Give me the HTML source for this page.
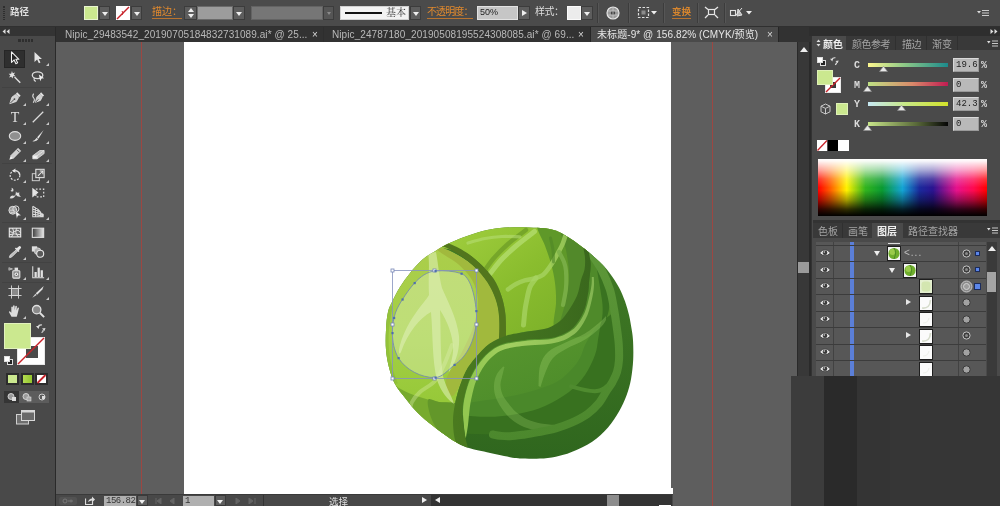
<!DOCTYPE html>
<html lang="zh-CN">
<head>
<meta charset="utf-8">
<title>Illustrator</title>
<style>
*{box-sizing:border-box;margin:0;padding:0}
html,body{width:1000px;height:506px;overflow:hidden;background:#5e5e5e}
body{position:relative;font-family:"Liberation Sans","Noto Sans CJK SC",sans-serif;font-size:11px;color:#d6d6d6;line-height:1}
.a{position:absolute}
#ctrl,#tabs,#tools,#right,#status{will-change:transform}
#ctrl{left:0;top:0;width:1000px;height:27px;background:#4b4b4b;border-bottom:1px solid #303030}
#tabs{left:56px;top:27px;width:755px;height:15px;background:#323232}
#tools{left:0;top:27px;width:56px;height:479px;background:#494949;border-right:1px solid #2a2a2a}
#toolhead{left:0;top:27px;width:55px;height:9px;background:#343434}
#paste{left:56px;top:42px;width:742px;height:464px;background:#5e5e5e}
#art{left:184px;top:42px;width:487px;height:452px;background:#fff}
.guide{top:42px;width:1px;height:464px;background:#9c4742}
#vscroll{left:797px;top:42px;width:14px;height:464px;background:#383838;border-left:1px solid #2a2a2a;border-right:2px solid #2a2a2a}
#right{left:811px;top:27px;width:189px;height:479px;background:#4a4a4a}
#status{left:56px;top:494px;width:617px;height:12px;background:#484848;border-top:1px solid #3a3a3a}
.btn{background:#5d5d5d;border:1px solid #3c3c3c}
.or{color:#e0892e;border-bottom:1px solid #b87430}
.tri-d{width:0;height:0;border-left:3px solid transparent;border-right:3px solid transparent;border-top:4px solid #eee}
</style>
</head>
<body>
<div id="paste" class="a"></div>
<div id="art" class="a"></div>
<!--CAB--><svg class="a" style="left:0;top:0" width="1000" height="506" viewBox="0 0 1000 506">
<defs>
<clipPath id="sil"><path d="M386.0 349.6C385.5 343.3 385.7 336.1 386.0 329.8C386.3 323.5 386.9 316.8 388.0 312.0C389.1 307.2 390.5 305.2 392.5 301.0C394.5 296.8 397.1 291.6 400.0 287.0C402.9 282.4 405.9 278.0 409.7 273.4C413.4 268.8 417.9 263.4 422.5 259.5C427.1 255.6 433.0 252.4 437.4 249.7C441.8 247.0 444.4 245.5 449.0 243.3C453.6 241.2 459.4 238.9 465.0 236.8C470.6 234.7 477.0 232.4 482.8 230.9C488.6 229.4 493.7 228.5 499.8 227.9C505.9 227.3 513.3 227.2 519.6 227.2C525.9 227.2 532.7 227.5 537.4 227.8C542.1 228.1 544.4 228.1 548.0 228.8C551.6 229.5 555.5 230.4 559.0 231.9C562.5 233.4 565.7 235.7 569.0 237.8C572.3 239.9 575.8 242.3 579.0 244.7C582.2 247.1 585.1 249.2 588.5 252.0C591.9 254.8 595.8 258.2 599.3 261.6C602.8 265.0 605.9 268.2 609.2 272.5C612.5 276.8 616.4 282.6 619.0 287.4C621.6 292.2 623.3 296.6 625.0 301.2C626.7 305.8 627.9 310.4 629.0 315.0C630.1 319.6 630.9 324.8 631.6 329.0C632.3 333.2 632.7 334.9 633.0 340.0C633.3 345.1 633.5 353.1 633.2 359.6C632.9 366.2 632.1 373.3 631.0 379.3C629.9 385.3 628.5 390.1 626.5 395.5C624.5 400.9 622.1 406.3 619.0 411.6C615.9 416.9 612.5 422.5 608.0 427.5C603.5 432.5 598.3 437.6 592.2 441.7C586.1 445.8 577.7 449.5 571.6 452.0C565.5 454.5 561.1 455.6 555.8 456.7C550.5 457.8 545.1 458.3 540.0 458.6C534.9 458.9 530.0 458.8 525.0 458.6C520.0 458.4 516.8 458.4 510.0 457.2C503.2 456.0 491.3 453.3 484.0 451.6C476.7 449.9 470.8 448.8 466.2 447.2C461.6 445.6 459.9 444.4 456.3 442.3C452.7 440.2 449.0 437.7 444.4 434.4C439.8 431.1 433.5 426.6 428.6 422.5C423.7 418.4 418.7 413.8 414.8 409.7C410.9 405.6 408.3 402.1 405.0 397.8C401.7 393.5 397.7 389.1 395.0 384.0C392.3 378.9 390.5 373.1 389.0 367.4C387.5 361.7 386.5 355.9 386.0 349.6Z"/></clipPath>
<linearGradient id="gTop" x1="0" y1="0" x2="1" y2="1"><stop offset="0" stop-color="#a3d040"/><stop offset=".5" stop-color="#8abd2e"/><stop offset="1" stop-color="#78ad28"/></linearGradient>
<linearGradient id="gBR" x1="0" y1="0" x2=".35" y2="1"><stop offset="0" stop-color="#68a634"/><stop offset=".5" stop-color="#5a982f"/><stop offset="1" stop-color="#4f8e2b"/></linearGradient>
<linearGradient id="gRim" x1="0" y1="0" x2="0" y2="1"><stop offset="0" stop-color="#427c25"/><stop offset=".45" stop-color="#3a7222"/><stop offset="1" stop-color="#2f661e"/></linearGradient>
<linearGradient id="gR" x1="0" y1="0" x2="1" y2="1"><stop offset="0" stop-color="#5f9a32"/><stop offset="1" stop-color="#4a8228"/></linearGradient>
<linearGradient id="gBand" gradientUnits="userSpaceOnUse" x1="455" y1="0" x2="590" y2="0"><stop offset="0" stop-color="#4a7a1f"/><stop offset=".5" stop-color="#42721f"/><stop offset="1" stop-color="#3a681d"/></linearGradient>
<linearGradient id="gLeft" gradientUnits="userSpaceOnUse" x1="0" y1="250" x2="0" y2="400"><stop offset="0" stop-color="#abce4b"/><stop offset=".6" stop-color="#a3cf44"/><stop offset="1" stop-color="#97c939"/></linearGradient>
<linearGradient id="gLv" gradientUnits="userSpaceOnUse" x1="600" y1="0" x2="470" y2="0"><stop offset="0" stop-color="#7fb250"/><stop offset=".35" stop-color="#93c358"/><stop offset=".7" stop-color="#a2cf60"/><stop offset="1" stop-color="#93c750"/></linearGradient>
<linearGradient id="gRv" gradientUnits="userSpaceOnUse" x1="0" y1="250" x2="0" y2="440"><stop offset="0" stop-color="#5e9839"/><stop offset=".45" stop-color="#548f33"/><stop offset="1" stop-color="#4c882d"/></linearGradient>
</defs>
<g clip-path="url(#sil)">
<rect x="380" y="220" width="260" height="245" fill="url(#gRim)"/>
<path d="M587.0 249.5C587.8 250.2 589.1 250.7 591.5 254.0C593.9 257.4 598.5 263.7 601.5 269.6C604.5 275.5 607.7 282.7 609.8 289.3C611.9 295.9 612.8 302.4 614.0 309.0C615.2 315.6 616.2 323.0 617.0 329.0C617.8 335.0 618.5 339.8 618.8 345.0C619.1 350.2 619.3 355.5 619.0 360.0C618.7 364.5 618.1 368.3 617.0 372.0C615.9 375.7 614.2 378.8 612.5 382.0C610.8 385.2 608.8 387.4 606.5 391.0C604.2 394.6 601.7 399.9 598.5 403.7C595.3 407.5 592.0 410.8 587.5 414.0C583.0 417.2 576.9 420.3 571.6 422.7C566.3 425.1 561.1 426.8 555.8 428.3C550.5 429.8 545.1 430.8 540.0 431.8C534.9 432.8 530.0 433.8 525.0 434.5C520.0 435.2 514.2 436.1 510.0 436.3C505.8 436.5 502.8 436.1 500.0 435.8C497.2 435.5 494.2 434.7 493.0 434.5L440 433L440 300L560 240Z" fill="#38711f"/>
<path d="M450.0 416.0C452.0 415.9 455.3 415.4 462.0 415.5C468.7 415.6 480.3 417.1 490.0 416.8C499.7 416.5 510.8 415.3 520.0 413.5C529.2 411.7 536.8 409.6 545.0 406.0C553.2 402.4 562.3 397.2 569.0 392.0C575.7 386.8 580.7 381.2 585.0 375.0C589.3 368.8 592.8 360.8 595.0 355.0C597.2 349.2 597.2 344.5 598.0 340.0C598.8 335.5 599.3 331.7 600.0 328.0C600.7 324.3 601.7 319.7 602.0 318.0L560 240L440 300L440 425Z" fill="#4a882a"/>
<path d="M450.0 405.0C452.0 404.8 457.0 404.7 462.0 404.0C467.0 403.3 473.7 402.0 480.0 401.0C486.3 400.0 492.1 399.4 500.0 398.0C507.9 396.6 518.5 394.9 527.7 392.3C536.9 389.7 548.0 386.5 555.4 382.6C562.8 378.7 567.9 372.9 572.0 368.7C576.1 364.5 577.8 361.6 580.0 357.7C582.2 353.8 583.0 349.1 585.0 345.0C587.0 340.9 589.5 336.8 592.0 333.0C594.5 329.2 598.7 323.8 600.0 322.0L560 240L440 300L440 405Z" fill="url(#gBR)"/>
<path d="M588.8 252.0C588.9 253.3 590.2 259.1 590.5 262.0C590.8 264.9 590.6 266.6 590.4 269.6C590.2 272.6 589.7 275.6 589.2 280.0C588.8 284.4 588.6 290.5 587.7 295.8C586.8 301.1 586.1 306.3 583.7 311.6C581.3 316.9 577.4 323.4 573.4 327.4C569.4 331.4 558.1 334.1 560.0 335.5C561.9 336.9 577.7 338.6 585.0 336.0C592.3 333.4 599.2 324.5 604.0 320.0C608.8 315.5 613.1 314.1 614.0 309.0C614.9 303.9 611.7 295.9 609.5 289.3C607.3 282.7 604.2 275.5 601.0 269.6C597.8 263.7 592.0 256.9 590.0 254.0C588.0 251.1 588.7 250.7 588.8 252.0Z" fill="#4f8a2a"/>
<path d="M596 264 C603 275 610 292 609.500 304 C609 314 606 321 600 328 C603 318 603.500 308 601.500 297 C600 287 598 276 596 264Z" fill="#397220"/>
<path d="M556.0 432.0C553.3 431.8 545.3 431.6 540.0 430.8C534.7 430.0 528.9 429.1 524.0 427.0C519.1 424.9 514.2 421.7 510.5 418.5C506.8 415.3 504.0 411.7 501.5 408.0C499.0 404.3 496.8 400.3 495.5 396.5C494.2 392.7 493.8 388.6 494.0 385.0C494.2 381.4 495.0 378.1 496.5 375.0C498.0 371.9 501.9 367.9 503.0 366.5L504.5 367.0C504.1 368.7 502.7 374.0 502.0 377.0C501.3 380.0 500.4 382.1 500.5 385.0C500.6 387.9 501.2 391.4 502.5 394.5C503.8 397.6 506.2 400.6 508.5 403.5C510.8 406.4 512.8 409.3 516.0 412.0C519.2 414.7 523.3 417.6 527.5 419.5C531.7 421.4 536.2 422.6 541.0 423.5C545.8 424.4 553.5 424.8 556.0 425.0Z" fill="#a4d670" opacity=".27"/>
<path d="M587.0 249.5C587.8 250.2 589.1 250.7 591.5 254.0C593.9 257.4 598.5 263.7 601.5 269.6C604.5 275.5 607.7 282.7 609.8 289.3C611.9 295.9 612.8 302.4 614.0 309.0C615.2 315.6 616.2 323.0 617.0 329.0C617.8 335.0 618.5 339.8 618.8 345.0C619.1 350.2 619.3 355.5 619.0 360.0C618.7 364.5 618.1 368.3 617.0 372.0C615.9 375.7 614.2 378.8 612.5 382.0C610.8 385.2 608.8 387.4 606.5 391.0C604.2 394.6 601.7 399.9 598.5 403.7C595.3 407.5 592.0 410.8 587.5 414.0C583.0 417.2 576.9 420.3 571.6 422.7C566.3 425.1 561.1 426.8 555.8 428.3C550.5 429.8 545.1 430.8 540.0 431.8C534.9 432.8 530.0 433.8 525.0 434.5C520.0 435.2 514.2 436.1 510.0 436.3C505.8 436.5 502.8 436.1 500.0 435.8C497.2 435.5 494.2 434.7 493.0 434.5" fill="none" stroke="url(#gRv)" stroke-width="8" stroke-linecap="round"/>
<path d="M571 386.300 C580 389 590 392 597 391 C601 390.500 604 389 607 386" fill="none" stroke="#4f8b2f" stroke-width="4" stroke-linecap="round"/>
<path d="M606.0 316.0C605.0 317.0 603.5 319.1 600.0 322.0C596.5 324.9 590.8 330.0 585.0 333.5C579.2 337.0 571.2 339.7 565.0 342.8C558.8 345.9 552.2 348.1 548.0 352.0C543.8 355.9 541.6 360.3 540.0 366.0C538.4 371.7 538.8 382.7 538.5 386.0L540.5 387.0C541.4 384.3 543.9 375.8 546.0 371.0C548.1 366.2 549.7 361.7 553.0 358.0C556.3 354.3 560.5 352.2 566.0 349.0C571.5 345.8 580.2 342.7 586.0 339.0C591.8 335.3 597.7 330.2 601.0 327.0C604.3 323.8 605.2 321.2 606.0 320.0Z" fill="#a4d670" opacity=".3"/>
<path d="M591.8 277.0C591.8 278.3 591.9 281.9 591.5 285.0C591.1 288.1 590.7 291.1 589.5 295.8C588.3 300.5 586.8 307.9 584.5 313.0C582.2 318.1 578.8 323.2 576.0 326.5C573.2 329.8 570.2 331.3 567.5 333.0C564.8 334.7 563.2 335.4 560.0 336.5C556.8 337.6 552.8 338.9 548.0 339.5C543.2 340.1 535.8 339.9 531.0 340.3C526.2 340.7 523.7 341.1 519.0 341.8C514.3 342.5 507.5 343.2 503.0 344.7C498.5 346.1 495.6 347.6 491.8 350.5C488.0 353.4 483.8 357.4 480.3 362.0C476.8 366.6 473.3 372.3 470.8 377.8C468.3 383.3 466.5 389.6 465.2 395.0C463.9 400.4 463.2 405.0 463.0 410.0C462.8 415.0 463.4 420.3 463.8 425.0C464.2 429.7 465.2 435.8 465.5 438.0L466.0 437.5C466.3 435.4 467.4 429.6 468.0 425.0C468.6 420.4 468.9 414.8 469.5 410.0C470.1 405.2 470.7 401.4 471.8 396.5C472.9 391.6 474.1 385.8 476.3 380.5C478.5 375.2 481.6 369.4 484.8 365.0C488.0 360.6 492.1 356.7 495.5 354.0C498.9 351.3 501.6 350.2 505.5 349.0C509.4 347.8 514.8 347.1 519.0 346.5C523.2 345.9 526.2 345.7 531.0 345.3C535.8 344.9 542.9 344.7 548.0 344.0C553.1 343.3 557.8 342.2 561.5 341.0C565.2 339.8 567.1 338.9 570.0 337.0C572.9 335.1 576.1 333.2 579.0 329.5C581.9 325.8 585.2 320.5 587.5 315.0C589.8 309.5 591.4 301.5 592.5 296.5C593.6 291.5 593.8 288.2 594.0 285.0C594.2 281.8 593.8 278.3 593.8 277.0Z" fill="url(#gLv)"/>
<path d="M441.0 246.0C441.0 242.6 455.2 236.0 465.0 232.0C474.8 228.0 486.2 223.7 500.0 222.0C513.8 220.3 534.2 219.0 548.0 222.0C561.8 225.0 576.3 234.2 583.0 240.0C589.7 245.8 587.0 252.1 588.0 257.0C589.0 261.9 589.3 264.1 589.0 269.4C588.7 274.7 587.5 283.1 586.0 289.0C584.5 294.9 583.3 299.2 580.0 305.0C576.7 310.8 571.3 319.8 566.0 324.0C560.7 328.2 553.8 328.8 548.0 330.0C542.2 331.2 535.8 330.5 531.0 331.0C526.2 331.5 523.2 331.9 519.0 332.9C514.8 333.9 508.2 340.0 506.0 337.0C503.8 334.0 506.2 321.8 505.5 315.0C504.8 308.2 503.5 302.0 501.5 296.0C499.5 290.0 497.1 284.2 493.7 279.0C490.3 273.8 485.8 268.9 481.0 264.5C476.2 260.1 471.7 255.7 465.0 252.6C458.3 249.5 441.0 249.4 441.0 246.0Z" fill="url(#gTop)"/>
<path d="M537.4 224.0C534.9 227.6 542.7 239.1 545.0 245.7C547.3 252.3 549.3 257.3 551.0 263.5C552.7 269.7 554.2 276.4 555.0 283.0C555.8 289.6 556.2 295.7 556.0 303.0C555.8 310.3 552.3 323.2 554.0 327.0C555.7 330.8 561.7 329.7 566.0 326.0C570.3 322.3 576.7 311.2 580.0 305.0C583.3 298.8 584.5 294.9 586.0 289.0C587.5 283.1 588.7 274.7 589.0 269.4C589.3 264.1 589.0 261.9 588.0 257.0C587.0 252.1 587.7 245.5 583.0 240.0C578.3 234.5 567.6 226.7 560.0 224.0C552.4 221.3 539.9 220.4 537.4 224.0Z" fill="#5f9829"/>
<path d="M560.0 228.0C559.3 231.3 564.5 242.2 566.0 250.0C567.5 257.8 569.0 266.7 569.0 275.0C569.0 283.3 567.5 291.3 566.0 300.0C564.5 308.7 557.7 326.2 560.0 327.0C562.3 327.8 575.7 311.3 580.0 305.0C584.3 298.7 584.5 294.9 586.0 289.0C587.5 283.1 588.7 274.7 589.0 269.4C589.3 264.1 589.0 261.9 588.0 257.0C587.0 252.1 586.0 244.5 583.0 240.0C580.0 235.5 573.8 232.0 570.0 230.0C566.2 228.0 560.7 224.7 560.0 228.0Z" fill="#52892a"/>
<path d="M526.0 230.0C523.0 232.3 513.3 239.3 508.0 244.0C502.7 248.7 497.8 253.7 494.0 258.0C490.2 262.3 486.5 268.0 485.0 270.0" fill="none" stroke="#6f9f27" stroke-width="4.500" stroke-linecap="round" opacity=".8"/>
<path d="M534.5 231.5C531.4 233.9 521.6 241.2 516.0 246.0C510.4 250.8 505.4 255.2 501.0 260.0C496.6 264.8 491.4 272.1 489.5 274.5" fill="none" stroke="#b0da6a" stroke-width="5" stroke-linecap="round" opacity=".85"/>
<path d="M468.0 243.0C470.8 242.2 479.3 239.6 485.0 238.5C490.7 237.4 496.2 236.8 502.0 236.5C507.8 236.2 517.0 236.8 520.0 236.8" fill="none" stroke="#b8de78" stroke-width="3.200" stroke-linecap="round" opacity=".55"/>
<path d="M508.0 289.4C509.3 288.5 513.2 285.5 516.0 284.0C518.8 282.5 521.8 281.3 524.8 280.4C527.8 279.5 531.0 279.4 534.0 278.5C537.0 277.6 540.0 277.2 542.8 275.0C545.6 272.8 548.5 268.7 551.0 265.0C553.5 261.3 556.0 256.7 558.0 253.0C560.0 249.3 561.7 246.3 563.0 243.0C564.3 239.7 565.5 234.7 566.0 233.0" fill="none" stroke="#a8d464" stroke-width="4.600" stroke-linecap="round" opacity=".75"/>
<path d="M536.0 278.0C535.0 279.5 531.4 283.8 530.0 287.0C528.6 290.2 528.2 293.2 527.4 297.0C526.6 300.8 525.6 305.3 525.0 310.0C524.4 314.7 523.8 322.5 523.5 325.0" fill="none" stroke="#a8d464" stroke-width="5" stroke-linecap="round" opacity=".75"/>
<path d="M559.0 252.0C559.8 253.7 562.8 258.8 564.0 262.0C565.2 265.2 565.7 266.7 566.0 271.0C566.3 275.3 566.5 282.3 566.0 288.0C565.5 293.7 563.5 302.2 563.0 305.0" fill="none" stroke="#7db04a" stroke-width="4.200" stroke-linecap="round" opacity=".85"/>
<path d="M550.5 238.0C550.9 240.0 552.5 246.0 553.0 250.0C553.5 254.0 553.4 260.0 553.5 262.0" fill="none" stroke="#4f8626" stroke-width="3" stroke-linecap="round" opacity=".6"/>
<path d="M380.0 350.0C379.2 336.7 376.7 313.3 380.0 300.0C383.3 286.7 392.5 278.3 400.0 270.0C407.5 261.7 418.2 253.9 425.0 250.0C431.8 246.1 437.8 246.8 441.0 246.5C444.2 246.2 440.7 246.8 444.0 248.5C447.3 250.2 455.8 253.8 461.0 257.0C466.2 260.2 471.1 263.8 475.5 268.0C479.9 272.2 484.2 277.3 487.5 282.5C490.8 287.7 493.6 293.4 495.5 299.0C497.4 304.6 498.4 309.2 499.0 316.0C499.6 322.8 500.6 335.4 499.0 340.0C497.4 344.6 493.3 340.8 489.4 343.7C485.5 346.6 479.6 353.0 475.6 357.6C471.7 362.2 468.5 366.2 465.7 371.4C462.9 376.6 460.6 383.4 458.8 389.0C457.0 394.6 455.8 399.8 454.8 405.0C453.8 410.2 453.1 415.0 453.0 420.0C452.9 425.0 453.3 430.7 454.0 435.0C454.7 439.3 461.0 445.2 457.0 446.0C453.0 446.8 439.5 446.0 430.0 440.0C420.5 434.0 407.5 420.0 400.0 410.0C392.5 400.0 388.3 390.0 385.0 380.0C381.7 370.0 380.8 363.3 380.0 350.0Z" fill="url(#gLeft)"/>
<path d="M437.0 249.5C436.7 248.2 440.0 247.2 444.0 248.5C448.0 249.8 455.8 253.8 461.0 257.0C466.2 260.2 471.1 263.8 475.5 268.0C479.9 272.2 484.2 277.3 487.5 282.5C490.8 287.7 493.6 293.4 495.5 299.0C497.4 304.6 498.4 309.2 499.0 316.0C499.6 322.8 500.6 335.4 499.0 340.0C497.4 344.6 493.3 340.8 489.4 343.7C485.5 346.6 479.6 353.0 475.6 357.6C471.7 362.2 468.3 366.8 465.7 371.4C463.1 376.0 462.3 380.9 460.0 385.0C457.7 389.1 454.3 396.8 452.0 396.0C449.7 395.2 444.3 387.3 446.0 380.0C447.7 372.7 457.3 361.2 462.0 352.0C466.7 342.8 471.3 333.7 474.0 325.0C476.7 316.3 478.3 307.5 478.0 300.0C477.7 292.5 475.3 286.0 472.0 280.0C468.7 274.0 462.3 268.0 458.0 264.0C453.7 260.0 449.5 258.4 446.0 256.0C442.5 253.6 437.3 250.8 437.0 249.5Z" fill="#a1b93d"/>
<path d="M380.0 372.0C383.1 366.7 392.2 383.8 398.8 388.0C405.4 392.2 412.9 394.7 419.6 397.0C426.3 399.3 432.6 400.8 439.0 402.0C445.4 403.2 455.2 401.5 458.0 404.5C460.8 407.5 456.0 412.4 456.0 420.0C456.0 427.6 464.0 445.0 458.0 450.0C452.0 455.0 433.0 455.0 420.0 450.0C407.0 445.0 386.7 433.0 380.0 420.0C373.3 407.0 376.9 377.3 380.0 372.0Z" fill="#77aa2e"/>
<path d="M428.0 400.0C429.2 397.0 434.0 401.2 439.0 402.0C444.0 402.8 455.2 401.5 458.0 404.5C460.8 407.5 456.0 412.4 456.0 420.0C456.0 427.6 459.8 446.7 458.0 450.0C456.2 453.3 449.3 445.0 445.0 440.0C440.7 435.0 434.8 426.7 432.0 420.0C429.2 413.3 426.8 403.0 428.0 400.0Z" fill="#63972a"/>
<path d="M390.0 306.0C389.4 310.0 387.1 322.5 386.5 329.8C385.9 337.1 386.0 343.3 386.5 349.6C387.0 355.9 388.0 361.7 389.5 367.4C391.0 373.1 394.5 381.2 395.5 384.0" fill="none" stroke="#86b832" stroke-width="5" opacity=".55"/>
<path d="M428 253 C430 262 428 280 429 295 C423 305 408 318 400 345 C398 352 399 356 401 352 C408 332 420 318 431 312 C433 335 432 360 437 380 C441 392 448 400 454 404 C452 396 446 388 443 376 C440 355 441 330 440 310 C448 322 454 338 453 352 C452 362 448 370 449 372 C456 362 460 350 459 336 C457 318 447 300 442 288 C439 276 438 262 436 252 Z" fill="#e8f5c8" opacity=".5"/>
<path d="M452.0 345.0C450.7 348.3 446.8 359.0 444.0 365.0C441.2 371.0 439.0 376.5 435.0 381.0C431.0 385.5 423.8 388.5 420.0 392.0C416.2 395.5 413.8 398.3 412.0 402.0C410.2 405.7 409.5 412.0 409.0 414.0" fill="none" stroke="#d4eba0" stroke-width="4" stroke-linecap="round" opacity=".4"/>
<path d="M444.0 244.0C444.8 243.9 445.3 242.1 449.0 243.5C452.7 244.9 460.7 248.7 466.0 252.2C471.3 255.7 476.4 260.0 481.0 264.5C485.6 269.0 490.3 273.8 493.7 279.0C497.1 284.2 499.5 290.0 501.5 296.0C503.5 302.0 504.8 308.0 505.5 315.0C506.2 322.0 505.9 334.2 506.0 338.0L499.0 340.0C499.0 336.0 499.6 322.8 499.0 316.0C498.4 309.2 497.4 304.6 495.5 299.0C493.6 293.4 490.8 287.7 487.5 282.5C484.2 277.3 479.8 272.3 475.5 268.0C471.2 263.7 466.9 259.9 462.0 256.5C457.1 253.1 449.5 249.0 446.0 247.5C442.5 246.0 441.8 247.5 441.0 247.5Z" fill="#52761d"/>
<path d="M583.0 246.0C583.3 248.0 584.8 254.1 585.0 258.0C585.2 261.9 585.2 265.9 584.5 269.6C583.8 273.3 582.2 275.6 581.0 280.0C579.8 284.4 579.2 290.5 577.0 295.8C574.8 301.1 570.8 307.4 568.0 311.6C565.2 315.8 563.3 318.3 560.0 321.0C556.7 323.7 552.8 326.3 548.0 328.0C543.2 329.7 535.8 330.2 531.0 331.0C526.2 331.8 523.2 332.1 519.0 332.9C514.8 333.7 510.9 333.9 506.0 335.7C501.1 337.5 494.5 340.0 489.4 343.7C484.3 347.4 479.6 353.0 475.6 357.6C471.7 362.2 468.5 366.2 465.7 371.4C462.9 376.6 460.6 383.4 458.8 389.0C457.0 394.6 455.8 399.8 454.8 405.0C453.8 410.2 453.1 415.0 453.0 420.0C452.9 425.0 453.5 431.2 454.0 435.0C454.5 438.8 455.7 441.7 456.0 443.0L468.0 448.0C467.6 446.3 466.2 441.8 465.5 438.0C464.8 434.2 464.0 429.7 463.5 425.0C463.0 420.3 462.3 415.0 462.5 410.0C462.7 405.0 463.4 400.4 464.7 395.0C466.0 389.6 467.7 383.0 470.2 377.4C472.7 371.8 476.1 366.1 479.6 361.5C483.1 356.9 487.5 352.7 491.4 349.7C495.3 346.7 498.4 345.2 503.0 343.7C507.6 342.2 514.3 341.5 519.0 340.8C523.7 340.1 526.2 339.7 531.0 339.3C535.8 338.9 543.2 339.1 548.0 338.5C552.8 337.9 555.8 337.4 560.0 335.5C564.2 333.6 569.4 331.4 573.4 327.4C577.4 323.4 581.3 316.9 583.7 311.6C586.1 306.3 586.8 301.1 587.7 295.8C588.6 290.5 588.8 284.4 589.2 280.0C589.7 275.6 590.2 272.6 590.4 269.6C590.6 266.6 590.8 264.9 590.5 262.0C590.2 259.1 589.1 253.7 588.8 252.0Z" fill="url(#gBand)"/>
</g>
<path d="M435 271C444 270.300 453.500 271 461.500 273.600C470 277 474.500 293 476.300 311C477.500 324 474 340 468 350C464 357 459.500 361.500 454.500 364.800C448 370 442 377.600 435 377.600C421 377.600 406 370 398.500 358C394 350.500 392.400 341 392.400 333C392.400 328 392.800 323 394 317.900C395.500 311 398.500 305.500 402.500 299.400C406 294 410 288 414.600 283C420 277 427 271.700 435 271Z" fill="#e0f0ba" fill-opacity=".43" stroke="#6e86b4" stroke-width=".8"/>
<rect x="392.500" y="270.500" width="84" height="108" fill="none" stroke="#8592bd" stroke-width=".8"/>
<rect x="391.0" y="269.0" width="3" height="3" fill="#fff" stroke="#7686b6" stroke-width=".8"/>
<rect x="433.0" y="269.0" width="3" height="3" fill="#fff" stroke="#7686b6" stroke-width=".8"/>
<rect x="475.0" y="269.0" width="3" height="3" fill="#fff" stroke="#7686b6" stroke-width=".8"/>
<rect x="391.0" y="323.0" width="3" height="3" fill="#fff" stroke="#7686b6" stroke-width=".8"/>
<rect x="475.0" y="323.0" width="3" height="3" fill="#fff" stroke="#7686b6" stroke-width=".8"/>
<rect x="391.0" y="377.0" width="3" height="3" fill="#fff" stroke="#7686b6" stroke-width=".8"/>
<rect x="433.0" y="377.0" width="3" height="3" fill="#fff" stroke="#7686b6" stroke-width=".8"/>
<rect x="475.0" y="377.0" width="3" height="3" fill="#fff" stroke="#7686b6" stroke-width=".8"/>
<rect x="434.4" y="270" width="2.2" height="2.2" fill="#4f70ae"/>
<rect x="460.5" y="272.6" width="2.2" height="2.2" fill="#4f70ae"/>
<rect x="475.3" y="310" width="2.2" height="2.2" fill="#4f70ae"/>
<rect x="453.5" y="363.8" width="2.2" height="2.2" fill="#4f70ae"/>
<rect x="434.4" y="376.6" width="2.2" height="2.2" fill="#4f70ae"/>
<rect x="397.5" y="357" width="2.2" height="2.2" fill="#4f70ae"/>
<rect x="391.4" y="332" width="2.2" height="2.2" fill="#4f70ae"/>
<rect x="393" y="316.9" width="2.2" height="2.2" fill="#4f70ae"/>
<rect x="401.5" y="298.4" width="2.2" height="2.2" fill="#4f70ae"/>
<rect x="413.6" y="282" width="2.2" height="2.2" fill="#4f70ae"/>
</svg><!--/CAB-->
<div class="a guide" style="left:141px"></div>
<div class="a guide" style="left:712px"></div>

<div id="ctrl" class="a">
  <div class="a" style="left:3px;top:6px;width:2px;height:14px;border-left:1px dotted #2e2e2e;border-right:1px dotted #2e2e2e"></div>
  <div class="a" style="left:10px;top:7px;font-size:9.500px;font-weight:bold;color:#dedede">路径</div>
  <div class="a" style="left:84px;top:6px;width:14px;height:14px;background:#cbe88f;border:1px solid #e8f4cf"></div>
  <div class="a btn" style="left:99px;top:6px;width:11px;height:14px"><div class="a tri-d" style="left:2px;top:5px"></div></div>
  <svg class="a" style="left:116px;top:6px" width="14" height="14" viewBox="0 0 14 14"><rect width="14" height="14" fill="#fff"/><path d="M1 13 L13 1" stroke="#c8232a" stroke-width="1.4"/><path d="M6 5 q2 2 0 4" stroke="#c8232a" stroke-width="1" fill="none"/></svg>
  <div class="a btn" style="left:131px;top:6px;width:11px;height:14px"><div class="a tri-d" style="left:2px;top:5px"></div></div>
  <div class="a or" style="left:152px;top:7px;font-size:10px;height:12px">描边：</div>
  <div class="a btn" style="left:184px;top:6px;width:13px;height:14px">
     <div class="a" style="left:3px;top:1px;width:0;height:0;border-left:3px solid transparent;border-right:3px solid transparent;border-bottom:4px solid #eee"></div>
     <div class="a" style="left:3px;top:7px;width:0;height:0;border-left:3px solid transparent;border-right:3px solid transparent;border-top:4px solid #eee"></div>
  </div>
  <div class="a" style="left:197px;top:6px;width:36px;height:14px;background:#9c9c9c;border:1px solid #6a6a6a"></div>
  <div class="a btn" style="left:233px;top:6px;width:12px;height:14px"><div class="a tri-d" style="left:2px;top:5px"></div></div>
  <div class="a" style="left:251px;top:6px;width:72px;height:14px;background:#767676;border:1px solid #636363"></div>
  <div class="a btn" style="left:323px;top:6px;width:11px;height:14px;background:#555"><div class="a tri-d" style="left:2px;top:5px;border-top-color:#8a8a8a;border-left-width:2px;border-right-width:2px;border-top-width:3px;left:3px"></div></div>
  <div class="a" style="left:340px;top:6px;width:69px;height:14px;background:#f2f2f2;border:1px solid #cfcfcf">
     <div class="a" style="left:4px;top:5px;width:37px;height:2px;background:#111"></div>
     <div class="a" style="left:45px;top:1px;font-size:10px;color:#333;font-family:'Liberation Serif','Noto Serif CJK SC',serif">基本</div>
  </div>
  <div class="a btn" style="left:410px;top:6px;width:11px;height:14px"><div class="a tri-d" style="left:2px;top:5px"></div></div>
  <div class="a or" style="left:427px;top:7px;font-size:10px;height:12px;letter-spacing:-0.9px">不透明度：</div>
  <div class="a" style="left:477px;top:6px;width:41px;height:14px;background:#c6c6c6;border:1px solid #e2e2e2;color:#222;font-size:9px;padding:1px 0 0 2px">50%</div>
  <div class="a btn" style="left:518px;top:6px;width:12px;height:14px"><div class="a" style="left:3px;top:3px;width:0;height:0;border-top:3px solid transparent;border-bottom:3px solid transparent;border-left:5px solid #eee"></div></div>
  <div class="a" style="left:535px;top:7px;font-size:10px;color:#dedede;letter-spacing:-0.5px">样式：</div>
  <div class="a" style="left:567px;top:6px;width:14px;height:14px;background:#ececec;border:1px solid #fafafa"></div>
  <div class="a btn" style="left:581px;top:6px;width:12px;height:14px"><div class="a tri-d" style="left:2px;top:5px"></div></div>
  <div class="a" style="left:597px;top:3px;width:2px;height:20px;border-left:1px solid #3c3c3c;border-right:1px solid #565656"></div><div class="a" style="left:628px;top:3px;width:2px;height:20px;border-left:1px solid #3c3c3c;border-right:1px solid #565656"></div><div class="a" style="left:663px;top:3px;width:2px;height:20px;border-left:1px solid #3c3c3c;border-right:1px solid #565656"></div><div class="a" style="left:697px;top:3px;width:2px;height:20px;border-left:1px solid #3c3c3c;border-right:1px solid #565656"></div><div class="a" style="left:724px;top:3px;width:2px;height:20px;border-left:1px solid #3c3c3c;border-right:1px solid #565656"></div>
  <svg class="a" style="left:606px;top:6px" width="14" height="14" viewBox="0 0 14 14"><circle cx="7" cy="7" r="6" fill="#9a9a9a" stroke="#e6e6e6" stroke-width="1.2"/><circle cx="7" cy="7" r="2.2" fill="#444"/><path d="M2 5 h10 M2 9 h10 M7 1 v12" stroke="#d0d0d0" stroke-width=".7" fill="none"/></svg>
  <svg class="a" style="left:637px;top:6px" width="22" height="14" viewBox="0 0 22 14"><rect x="1.5" y="1.5" width="10" height="10" fill="none" stroke="#e0e0e0" stroke-width="1.2" stroke-dasharray="2.5 1.5"/><rect x="4.5" y="4.5" width="4" height="4" fill="#8c8c8c"/><path d="M14 5 h6 l-3 3.5z" fill="#eee"/></svg>
  <div class="a or" style="left:672px;top:7px;font-size:9.500px;height:12px;font-weight:bold;color:#d8862e">变换</div>
  <svg class="a" style="left:704px;top:6px" width="15" height="13" viewBox="0 0 15 13"><rect x="4.5" y="3.5" width="6" height="5" fill="none" stroke="#e6e6e6" stroke-width="1.2"/><path d="M1 1 l3 2.5 M14 1 l-3 2.5 M1 12 l3 -3 M14 12 l-3 -3" stroke="#e6e6e6" stroke-width="1.3"/></svg>
  <svg class="a" style="left:729px;top:6px" width="26" height="13" viewBox="0 0 26 13"><rect x="1.500" y="4.500" width="5" height="5" fill="none" stroke="#e0e0e0" stroke-width="1.1"/><path d="M7 9 l6 -7 M9 3 l4 6 -5 1z" stroke="#e0e0e0" stroke-width="1" fill="#bbb"/><path d="M17 5 h6 l-3 3.500z" fill="#eee"/></svg>
  <svg class="a" style="left:977px;top:9px" width="12" height="8" viewBox="0 0 12 8"><path d="M0 2 h4 l-2 2.500z" fill="#ddd"/><path d="M5 1.500 h7 M5 4 h7 M5 6.500 h7" stroke="#ccc" stroke-width="1"/></svg>
</div>


<div id="tabs" class="a" style="font-size:10px;color:#b9b9b9;white-space:nowrap;letter-spacing:.08px">
  <div class="a" style="left:9px;top:3px">Nipic_29483542_20190705184832731089.ai* @ 25...</div>
  <div class="a" style="left:256px;top:2.500px;color:#d8d8d8">×</div>
  <div class="a" style="left:267px;top:0;width:1px;height:15px;background:#2e2e2e"></div>
  <div class="a" style="left:276px;top:3px">Nipic_24787180_20190508195524308085.ai* @ 69...</div>
  <div class="a" style="left:522px;top:2.500px;color:#d8d8d8">×</div>
  <div class="a" style="left:534px;top:0;width:189px;height:15px;background:#4a4a4a;border-left:1px solid #262626;border-right:1px solid #262626"></div>
  <div class="a" style="left:541px;top:3px;color:#e6e6e6">未标题-9* @ 156.82% (CMYK/预览)</div>
  <div class="a" style="left:711px;top:2.500px;color:#d8d8d8">×</div>
</div>

<div id="tools" class="a">
<div class="a" style="left:4px;top:23px;width:21px;height:18px;background:#2f2f2f;border:1px solid #262626"></div>
<div class="a" style="left:2px;top:60.0px;width:50px;height:1px;background:#424242"></div>
<div class="a" style="left:2px;top:136.0px;width:50px;height:1px;background:#424242"></div>
<div class="a" style="left:2px;top:195.0px;width:50px;height:1px;background:#424242"></div>
<div class="a" style="left:2px;top:235.0px;width:50px;height:1px;background:#424242"></div>
<div class="a" style="left:2px;top:254.5px;width:50px;height:1px;background:#424242"></div>
<svg class="a" style="left:8px;top:24.0px" width="14" height="14" viewBox="0 0 16 16"><path d="M4 1 L4 13 L7 10.200 L9 14.500 L11 13.500 L9 9.500 L12.500 9.500 Z" fill="#222" stroke="#f0f0f0" stroke-width="1.2" stroke-linejoin="round"/></svg>
<svg class="a" style="left:31px;top:24.0px" width="14" height="14" viewBox="0 0 16 16"><path d="M4 1 L4 12.500 L7 9.800 L9 14 L10.800 13 L8.800 9.200 L12.500 9.200 Z" fill="#e4e4e4"/></svg>
<div class="a" style="left:46px;top:36.0px;width:0;height:0;border-left:3px solid transparent;border-bottom:3px solid #c8c8c8"></div>
<svg class="a" style="left:8px;top:43.0px" width="14" height="14" viewBox="0 0 16 16"><path d="M4.500 1 l1 2.600 2.700 -.8 -1.600 2.300 2 1.900 -2.800 .1 -.5 2.700 -1.600 -2.200 -2.600 .9 1.600 -2.300 -1.900 -2 2.800 0z" fill="#e0e0e0"/><path d="M7.500 8 L14 14.500" stroke="#e0e0e0" stroke-width="1.600"/></svg>
<svg class="a" style="left:31px;top:43.0px" width="14" height="14" viewBox="0 0 16 16"><ellipse cx="7.500" cy="6" rx="6" ry="3.800" fill="none" stroke="#dcdcdc" stroke-width="1.500"/><path d="M4 9 q-1.500 3 1.500 4" fill="none" stroke="#dcdcdc" stroke-width="1.300"/><path d="M9 5 l6 4.500 -3 .3 -1.500 3z" fill="#f0f0f0"/></svg>
<svg class="a" style="left:8px;top:64.0px" width="14" height="14" viewBox="0 0 16 16"><path d="M10.500 1.500 l4 4 -2 1.600 -3.600 -3.600z" fill="#e0e0e0"/><path d="M8.500 4 l3.500 3.500 -2.500 4.500 -7.500 2.500 2.500 -7.500z" fill="#cfcfcf" stroke="#eee" stroke-width=".8"/><path d="M2.500 14 l4.500 -4.500" stroke="#444" stroke-width="1"/><circle cx="7.400" cy="9.200" r="1" fill="#444"/></svg>
<div class="a" style="left:23px;top:76.0px;width:0;height:0;border-left:3px solid transparent;border-bottom:3px solid #c8c8c8"></div>
<svg class="a" style="left:31px;top:64.0px" width="14" height="14" viewBox="0 0 16 16"><path d="M11.500 1.500 l3.500 3.500 -1.800 1.500 -3.200 -3.200z" fill="#e0e0e0"/><path d="M9.800 3.800 l3 3 -2 4 -6 2.200 2 -6.200z" fill="#cfcfcf" stroke="#eee" stroke-width=".8"/><path d="M5 13 l3.500 -3.500" stroke="#444" stroke-width="1"/><path d="M3 3 q-2 3 0 5 t-.5 5.500" fill="none" stroke="#dcdcdc" stroke-width="1.200"/></svg>
<div class="a" style="left:46px;top:76.0px;width:0;height:0;border-left:3px solid transparent;border-bottom:3px solid #c8c8c8"></div>
<svg class="a" style="left:8px;top:83.0px" width="14" height="14" viewBox="0 0 16 16"><text x="8" y="13.500" font-family="Liberation Serif,serif" font-size="16" text-anchor="middle" fill="#e2e2e2">T</text></svg>
<div class="a" style="left:23px;top:95.0px;width:0;height:0;border-left:3px solid transparent;border-bottom:3px solid #c8c8c8"></div>
<svg class="a" style="left:31px;top:83.0px" width="14" height="14" viewBox="0 0 16 16"><path d="M2 14 L14 2" stroke="#dcdcdc" stroke-width="1.500"/></svg>
<div class="a" style="left:46px;top:95.0px;width:0;height:0;border-left:3px solid transparent;border-bottom:3px solid #c8c8c8"></div>
<svg class="a" style="left:8px;top:102.0px" width="14" height="14" viewBox="0 0 16 16"><ellipse cx="8" cy="8" rx="6.500" ry="5" fill="#8f8f8f" stroke="#dedede" stroke-width="1.300"/></svg>
<div class="a" style="left:23px;top:114.0px;width:0;height:0;border-left:3px solid transparent;border-bottom:3px solid #c8c8c8"></div>
<svg class="a" style="left:31px;top:102.0px" width="14" height="14" viewBox="0 0 16 16"><path d="M14.500 1 L7 9.500 l1.500 1.500z" fill="#e6e6e6"/><path d="M6.500 10 l1.800 1.800 q-2 3 -6.800 2.200 q3 -.8 5 -4z" fill="#dcdcdc"/></svg>
<div class="a" style="left:46px;top:114.0px;width:0;height:0;border-left:3px solid transparent;border-bottom:3px solid #c8c8c8"></div>
<svg class="a" style="left:8px;top:120.0px" width="14" height="14" viewBox="0 0 16 16"><path d="M11.500 1.500 l3 3 -8.500 8.500 -3 -3z" fill="#cfcfcf" stroke="#eee" stroke-width=".7"/><path d="M3 10 l3 3 -4.500 1.500z" fill="#eee"/><path d="M10 3 l3 3" stroke="#555" stroke-width="1"/></svg>
<div class="a" style="left:23px;top:132.0px;width:0;height:0;border-left:3px solid transparent;border-bottom:3px solid #c8c8c8"></div>
<svg class="a" style="left:31px;top:120.0px" width="14" height="14" viewBox="0 0 16 16"><path d="M2 10 l8 -6 h5 v3.500 l-8 6 h-5z" fill="#bdbdbd" stroke="#eee" stroke-width=".8"/><path d="M2 10 h5 l8 -6 M7 10 v3.500" stroke="#eee" stroke-width=".8" fill="none"/><path d="M2.400 10.400 h4.200 v2.700 h-4.200z" fill="#f2f2f2"/></svg>
<div class="a" style="left:46px;top:132.0px;width:0;height:0;border-left:3px solid transparent;border-bottom:3px solid #c8c8c8"></div>
<svg class="a" style="left:8px;top:140.5px" width="14" height="14" viewBox="0 0 16 16"><circle cx="8" cy="8.500" r="5.500" fill="none" stroke="#dcdcdc" stroke-width="1.400" stroke-dasharray="2.200 1.600"/><path d="M8 3 a5.500 5.500 0 0 1 5.500 5.500" fill="none" stroke="#dcdcdc" stroke-width="1.500"/><path d="M8.500 .5 v5 l-4 -2.500z" fill="#e6e6e6"/></svg>
<div class="a" style="left:23px;top:152.5px;width:0;height:0;border-left:3px solid transparent;border-bottom:3px solid #c8c8c8"></div>
<svg class="a" style="left:31px;top:140.5px" width="14" height="14" viewBox="0 0 16 16"><rect x="1.500" y="6.500" width="8" height="8" fill="none" stroke="#cfcfcf" stroke-width="1.100"/><rect x="5.500" y="1.500" width="9.500" height="9.500" fill="#5a5a5a" stroke="#e4e4e4" stroke-width="1.200"/><path d="M8 9 l5 -5 M10 3.500 h3.500 v3.500" stroke="#e6e6e6" stroke-width="1.200" fill="none"/></svg>
<div class="a" style="left:46px;top:152.5px;width:0;height:0;border-left:3px solid transparent;border-bottom:3px solid #c8c8c8"></div>
<svg class="a" style="left:8px;top:159.0px" width="14" height="14" viewBox="0 0 16 16"><path d="M2 14 q1 -4 4 -3 t3 -5 q1 3 4 1 q-1 4 2 5 q-4 1 -6 -2 q-2 5 -7 4z" fill="#dcdcdc"/><path d="M4 2 q3 1 2 4 q-3 1 -3 -1 q2 0 1 -3z" fill="#dcdcdc"/></svg>
<div class="a" style="left:23px;top:171.0px;width:0;height:0;border-left:3px solid transparent;border-bottom:3px solid #c8c8c8"></div>
<svg class="a" style="left:31px;top:159.0px" width="14" height="14" viewBox="0 0 16 16"><path d="M1.500 2 v11 l7 -5.500z" fill="#e6e6e6"/><rect x="5.500" y="3.500" width="9" height="9" fill="none" stroke="#dcdcdc" stroke-width="1.400" stroke-dasharray="2 2"/></svg>
<svg class="a" style="left:8px;top:178.0px" width="14" height="14" viewBox="0 0 16 16"><circle cx="5.500" cy="6" r="4.500" fill="#9a9a9a" stroke="#e0e0e0" stroke-width="1.100"/><circle cx="9" cy="4.500" r="3.500" fill="none" stroke="#e0e0e0" stroke-width="1.100"/><path d="M2 6 h7 M3 8.500 h5" stroke="#e0e0e0" stroke-width=".8"/><path d="M8 6 l7 6 -3.500 .3 -1.500 3z" fill="#f0f0f0" stroke="#555" stroke-width=".5"/></svg>
<div class="a" style="left:23px;top:190.0px;width:0;height:0;border-left:3px solid transparent;border-bottom:3px solid #c8c8c8"></div>
<svg class="a" style="left:31px;top:178.0px" width="14" height="14" viewBox="0 0 16 16"><path d="M2 1.500 v12 h12.500 M5 2.500 v11 M8 5 v8.500 M11 8 v5.500 M2 4.500 l6 2.500 6.500 4 M2 7.500 l6 1.500 6.500 3 M2 10.500 l12.500 2.200 M2 1.500 l6 3.500 3 3" stroke="#dcdcdc" stroke-width="1.200" fill="none"/></svg>
<div class="a" style="left:46px;top:190.0px;width:0;height:0;border-left:3px solid transparent;border-bottom:3px solid #c8c8c8"></div>
<svg class="a" style="left:8px;top:198.5px" width="14" height="14" viewBox="0 0 16 16"><rect x="1.500" y="2.500" width="13" height="10" fill="#6a6a6a" stroke="#e6e6e6" stroke-width="1.300"/><path d="M1.500 6 q4 3 7 0 t6 2 M5 2.500 q3 4 -1 10 M10 2.500 q-3 5 2 10 M1.500 10 q5 -2 13 0" stroke="#e6e6e6" stroke-width="1.100" fill="none"/></svg>
<svg class="a" style="left:31px;top:198.5px" width="14" height="14" viewBox="0 0 16 16"><defs><linearGradient id="tg"><stop offset="0" stop-color="#3a3a3a"/><stop offset="1" stop-color="#e8e8e8"/></linearGradient></defs><rect x="1.500" y="2.500" width="13" height="10.500" fill="url(#tg)" stroke="#e0e0e0" stroke-width="1.200"/></svg>
<svg class="a" style="left:8px;top:218.0px" width="14" height="14" viewBox="0 0 16 16"><path d="M13 1 q2 0 2 2 l-3 3.500 -2.500 -2.500z" fill="#e6e6e6"/><path d="M8.500 3.500 l4 4" stroke="#e6e6e6" stroke-width="1.800"/><path d="M9.500 5.500 l1.500 1.500 -6.500 6.500 -2.500 1 -.5 -.5 1 -2.500z" fill="#bdbdbd" stroke="#eee" stroke-width=".8"/></svg>
<div class="a" style="left:23px;top:230.0px;width:0;height:0;border-left:3px solid transparent;border-bottom:3px solid #c8c8c8"></div>
<svg class="a" style="left:31px;top:218.0px" width="14" height="14" viewBox="0 0 16 16"><rect x="1" y="1.500" width="6" height="6" fill="#e0e0e0"/><circle cx="7.500" cy="7" r="3.800" fill="#b0b0b0" stroke="#e0e0e0" stroke-width=".8"/><circle cx="10.500" cy="10" r="4" fill="#5a5a5a" stroke="#e6e6e6" stroke-width="1.300"/></svg>
<svg class="a" style="left:8px;top:238.0px" width="14" height="14" viewBox="0 0 16 16"><rect x="5.500" y="6.500" width="8" height="8.500" rx="1" fill="#8a8a8a" stroke="#e6e6e6" stroke-width="1.200"/><rect x="7.500" y="3" width="4" height="3.500" fill="#e0e0e0"/><circle cx="9.500" cy="10.500" r="2" fill="#eee"/><circle cx="9.500" cy="10.500" r=".8" fill="#444"/><path d="M1 3 l3.500 1.500 -3.500 1.500z M1 4.500 h5" stroke="#cfcfcf" stroke-width=".8" fill="none"/></svg>
<div class="a" style="left:23px;top:250.0px;width:0;height:0;border-left:3px solid transparent;border-bottom:3px solid #c8c8c8"></div>
<svg class="a" style="left:31px;top:238.0px" width="14" height="14" viewBox="0 0 16 16"><path d="M2 1.500 v13 h13" stroke="#dcdcdc" stroke-width="1.200" fill="none"/><rect x="4" y="8" width="2.600" height="6" fill="#e0e0e0"/><rect x="7.500" y="3" width="2.600" height="11" fill="#e0e0e0"/><rect x="11" y="6" width="2.600" height="8" fill="#e0e0e0"/></svg>
<div class="a" style="left:46px;top:250.0px;width:0;height:0;border-left:3px solid transparent;border-bottom:3px solid #c8c8c8"></div>
<svg class="a" style="left:8px;top:258.0px" width="14" height="14" viewBox="0 0 16 16"><rect x="4" y="4" width="8" height="8" fill="#8a8a8a" stroke="#e0e0e0" stroke-width="1"/><path d="M4 .5 v15 M12 .5 v15 M.5 4 h15 M.5 12 h15" stroke="#dcdcdc" stroke-width="1"/></svg>
<svg class="a" style="left:31px;top:258.0px" width="14" height="14" viewBox="0 0 16 16"><path d="M14.500 1 l-9 8.500 1.500 1.500 6 -6z" fill="#e0e0e0"/><path d="M5 10 l1.500 1.500 -5 3z" fill="#cfcfcf"/></svg>
<div class="a" style="left:46px;top:270.0px;width:0;height:0;border-left:3px solid transparent;border-bottom:3px solid #c8c8c8"></div>
<svg class="a" style="left:8px;top:277.0px" width="14" height="14" viewBox="0 0 16 16"><path d="M4 14.500 l-3 -5.500 q.8 -1.200 2 0 l.8 1 v-6.500 q.9 -1.200 1.800 0 v3.500 l.2 -5 q.9 -1.200 1.800 0 l.1 5 .7 -4.500 q.9 -1 1.800 0 l-.4 5 1.200 -3.200 q1 -.8 1.600 .2 l-1.600 6.500 -1 3.500z" fill="#dcdcdc"/></svg>
<div class="a" style="left:23px;top:289.0px;width:0;height:0;border-left:3px solid transparent;border-bottom:3px solid #c8c8c8"></div>
<svg class="a" style="left:31px;top:277.0px" width="14" height="14" viewBox="0 0 16 16"><circle cx="6.500" cy="6.500" r="4.800" fill="#8a8a8a" stroke="#e0e0e0" stroke-width="1.500"/><path d="M10 10 l5 5" stroke="#e0e0e0" stroke-width="2.200"/></svg>
<div class="a" style="left:17px;top:310px;width:28px;height:28px;background:#fff;border:1px solid #e8e8e8"></div>
<div class="a" style="left:26px;top:319px;width:12px;height:12px;background:#4a4a4a"></div>
<svg class="a" style="left:17px;top:310px" width="28" height="28"><path d="M1 27 L27 1" stroke="#c8232a" stroke-width="1.500"/></svg>
<div class="a" style="left:4px;top:296px;width:27px;height:26px;background:#cbe88f;border:1px solid #e2f2bd"></div>
<svg class="a" style="left:36px;top:296px" width="11" height="11" viewBox="0 0 11 11"><path d="M2 4 q1 -2.500 4 -2 M7 7 q.5 2 -1.500 2.500" stroke="#dcdcdc" stroke-width="1.200" fill="none"/><path d="M0 3 l3.500 0 -1 3z M9.500 5 l-3.500 .5 2.500 2.500z" fill="#dcdcdc"/></svg>
<div class="a" style="left:7px;top:332px;width:6px;height:6px;background:#222;border:1px solid #ddd"></div>
<div class="a" style="left:4px;top:329px;width:6px;height:6px;background:#fff;border:1px solid #ddd"></div>
<div class="a" style="left:6px;top:346px;width:13px;height:12px;background:#cbe88f;border:2px solid #2c2c2c"></div>
<div class="a" style="left:21px;top:346px;width:13px;height:12px;background:linear-gradient(90deg,#b4dc52,#93c52d);border:2px solid #2c2c2c"></div>
<svg class="a" style="left:35px;top:346px" width="13" height="12"><rect width="13" height="12" fill="#2c2c2c"/><rect x="2" y="2" width="9" height="8" fill="#fff"/><path d="M2.500 10 L10.500 2" stroke="#c8232a" stroke-width="1.800"/></svg>
<div class="a" style="left:4px;top:364px;width:15px;height:12px;background:#353535"></div>
<div class="a" style="left:19px;top:364px;width:30px;height:12px;background:#5c5c5c"></div>
<svg class="a" style="left:4px;top:364px" width="45" height="12" viewBox="0 0 45 12"><circle cx="7" cy="5.500" r="3" fill="#999" stroke="#ddd" stroke-width=".9"/><rect x="8" y="6" width="4" height="4" fill="#ddd"/><circle cx="22" cy="5.500" r="3" fill="#999" stroke="#ddd" stroke-width=".9"/><rect x="23" y="6" width="4" height="4" fill="#aaa" stroke="#ddd" stroke-width=".6"/><circle cx="38" cy="6" r="3" fill="none" stroke="#ddd" stroke-width=".9"/><rect x="38" y="5" width="3" height="3" fill="#ddd"/></svg>
<svg class="a" style="left:16px;top:383px" width="19" height="15" viewBox="0 0 19 15"><rect x=".5" y="4.500" width="12" height="9.500" fill="#6e6e6e" stroke="#d0d0d0"/><rect x="5.500" y=".5" width="13" height="10" fill="#6a6a6a" stroke="#d8d8d8"/><rect x="5.500" y=".5" width="13" height="2" fill="#d8d8d8"/></svg>

</div>
<div id="toolhead" class="a"><svg class="a" style="left:2px;top:2px" width="8" height="5" viewBox="0 0 8 5"><path d="M3.500 0 v5 l-3 -2.500z M7.500 0 v5 l-3 -2.500z" fill="#ddd"/></svg></div>
<div class="a" style="left:18px;top:39px;width:16px;height:3px;border-left:1px solid #2e2e2e;background:repeating-linear-gradient(90deg,#2e2e2e 0 2px,transparent 2px 3px)"></div>

<div id="vscroll" class="a">
  <div class="a" style="left:2px;top:5px;width:0;height:0;border-left:4px solid transparent;border-right:4px solid transparent;border-bottom:5px solid #eee"></div>
  <div class="a" style="left:0;top:220px;width:11px;height:11px;background:#9a9a9a"></div>
</div>
<div id="right" class="a" style="font-size:10px;white-space:nowrap">
  <div class="a" style="left:-2px;top:0;width:191px;height:9px;background:#2e2e2e"></div>
  <svg class="a" style="left:179px;top:2px" width="8" height="5" viewBox="0 0 8 5"><path d="M.5 0 v5 l3 -2.500z M4.500 0 v5 l3 -2.500z" fill="#ddd"/></svg>
  <div class="a" style="left:0;top:9px;width:1px;height:470px;background:#333"></div>
  <!-- color panel tabs -->
  <div class="a" style="left:2px;top:9px;width:187px;height:14px;background:#393939"></div>
  <div class="a" style="left:2px;top:9px;width:33px;height:15px;background:#4a4a4a"></div>
  <svg class="a" style="left:5px;top:12px" width="5" height="8" viewBox="0 0 5 8"><path d="M.5 3 l2 -2.500 2 2.500z M.5 5 l2 2.500 2 -2.500z" fill="#ddd"/></svg>
  <div class="a" style="left:12px;top:12.500px;color:#f0f0f0;font-weight:bold">颜色</div>
  <div class="a" style="left:41px;top:12.500px;color:#a4a4a4;letter-spacing:-.5px">颜色参考</div>
  <div class="a" style="left:84px;top:9px;width:1px;height:14px;background:#303030"></div>
  <div class="a" style="left:91px;top:12.500px;color:#a4a4a4;letter-spacing:-.5px">描边</div>
  <div class="a" style="left:115px;top:9px;width:1px;height:14px;background:#303030"></div>
  <div class="a" style="left:121px;top:12.500px;color:#a4a4a4">渐变</div>
  <div class="a" style="left:146px;top:9px;width:1px;height:14px;background:#303030"></div>
  <svg class="a" style="left:176px;top:13px" width="11" height="7" viewBox="0 0 11 7"><path d="M0 1 h3.500 l-1.750 2.500z" fill="#ddd"/><path d="M5 1 h6 M5 3.500 h6 M5 6 h6" stroke="#c8c8c8" stroke-width="1.200"/></svg>
  <!-- swatches -->
  <div class="a" style="left:9px;top:33px;width:6px;height:6px;background:#222;border:1px solid #ddd"></div>
  <div class="a" style="left:6px;top:30px;width:6px;height:6px;background:#fff;border:1px solid #ddd"></div>
  <svg class="a" style="left:19px;top:29px" width="10" height="10" viewBox="0 0 11 11"><path d="M2 4 q1 -2.500 4 -2 M7 7 q.5 2 -1.500 2.500" stroke="#dcdcdc" stroke-width="1.200" fill="none"/><path d="M0 3 l3.500 0 -1 3z M9.500 5 l-3.500 .5 2.500 2.500z" fill="#dcdcdc"/></svg>
  <div class="a" style="left:14px;top:50px;width:16px;height:16px;background:#fff;border:1px solid #e8e8e8"></div>
  <div class="a" style="left:19px;top:55px;width:6px;height:6px;background:#3a3a3a"></div>
  <svg class="a" style="left:14px;top:50px" width="16" height="16"><path d="M1 15 L15 1" stroke="#c8232a" stroke-width="1.500"/></svg>
  <div class="a" style="left:6px;top:43px;width:16px;height:15px;background:#cbe88f;border:1px solid #def0b6"></div>
  <svg class="a" style="left:9px;top:76px" width="11" height="12" viewBox="0 0 11 12"><path d="M5.500 1 l4.500 2.200 v5.600 l-4.500 2.200 -4.500 -2.200 v-5.600z M1 3.200 l4.500 2.200 4.500 -2.200 M5.500 5.400 v5.600" fill="none" stroke="#c8c8c8" stroke-width="1"/></svg>
  <div class="a" style="left:25px;top:76px;width:12px;height:12px;background:#cbe88f;border:1px solid #def0b6"></div>
  <!-- sliders -->
  <div class="a" style="left:43px;top:34px;color:#dcdcdc;font-family:'Liberation Mono',monospace;font-weight:bold;font-size:10px">C</div>
  <div class="a" style="left:43px;top:54px;color:#dcdcdc;font-family:'Liberation Mono',monospace;font-weight:bold;font-size:10px">M</div>
  <div class="a" style="left:43px;top:73px;color:#dcdcdc;font-family:'Liberation Mono',monospace;font-weight:bold;font-size:10px">Y</div>
  <div class="a" style="left:43px;top:93px;color:#dcdcdc;font-family:'Liberation Mono',monospace;font-weight:bold;font-size:10px">K</div>
  <div class="a" style="left:57px;top:36px;width:80px;height:4px;background:linear-gradient(90deg,#fdf78f,#8fc987 45%,#1c8a8c)"></div>
  <div class="a" style="left:57px;top:55px;width:80px;height:4px;background:linear-gradient(90deg,#bfe184,#d98a6a 55%,#c01c52)"></div>
  <div class="a" style="left:57px;top:75px;width:80px;height:4px;background:linear-gradient(90deg,#c6e8f4,#c8e88a 45%,#d2e22a)"></div>
  <div class="a" style="left:57px;top:95px;width:80px;height:4px;background:linear-gradient(90deg,#c8e68a,#5a6a3a 60%,#050505)"></div>
  <svg class="a" style="left:68px;top:39px" width="9" height="6" viewBox="0 0 9 6"><path d="M4.500 .3 L8.500 5.500 H.5z" fill="#e8e8e8" stroke="#8a8a8a" stroke-width=".6"/></svg>
  <svg class="a" style="left:52px;top:59px" width="9" height="6" viewBox="0 0 9 6"><path d="M4.500 .3 L8.500 5.500 H.5z" fill="#e8e8e8" stroke="#8a8a8a" stroke-width=".6"/></svg>
  <svg class="a" style="left:86px;top:78px" width="9" height="6" viewBox="0 0 9 6"><path d="M4.500 .3 L8.500 5.500 H.5z" fill="#e8e8e8" stroke="#8a8a8a" stroke-width=".6"/></svg>
  <svg class="a" style="left:52px;top:98px" width="9" height="6" viewBox="0 0 9 6"><path d="M4.500 .3 L8.500 5.500 H.5z" fill="#e8e8e8" stroke="#8a8a8a" stroke-width=".6"/></svg>
<div class="a" style="left:142px;top:31px;width:26px;height:14px;background:#b9b9b9;border:1px solid #d9d9d9;border-right-color:#9a9a9a;border-bottom-color:#9a9a9a;color:#222;font-family:'Liberation Mono',monospace;font-size:9px;letter-spacing:0;padding:2px 0 0 2px;overflow:hidden">19.67</div>
<div class="a" style="left:170px;top:34px;color:#dcdcdc;font-family:'Liberation Mono',monospace;font-size:10px;font-weight:bold">%</div>
<div class="a" style="left:142px;top:51px;width:26px;height:14px;background:#b9b9b9;border:1px solid #d9d9d9;border-right-color:#9a9a9a;border-bottom-color:#9a9a9a;color:#222;font-family:'Liberation Mono',monospace;font-size:9px;letter-spacing:0;padding:2px 0 0 2px;overflow:hidden">0</div>
<div class="a" style="left:170px;top:54px;color:#dcdcdc;font-family:'Liberation Mono',monospace;font-size:10px;font-weight:bold">%</div>
<div class="a" style="left:142px;top:70px;width:26px;height:14px;background:#b9b9b9;border:1px solid #d9d9d9;border-right-color:#9a9a9a;border-bottom-color:#9a9a9a;color:#222;font-family:'Liberation Mono',monospace;font-size:9px;letter-spacing:0;padding:2px 0 0 2px;overflow:hidden">42.33</div>
<div class="a" style="left:170px;top:73px;color:#dcdcdc;font-family:'Liberation Mono',monospace;font-size:10px;font-weight:bold">%</div>
<div class="a" style="left:142px;top:90px;width:26px;height:14px;background:#b9b9b9;border:1px solid #d9d9d9;border-right-color:#9a9a9a;border-bottom-color:#9a9a9a;color:#222;font-family:'Liberation Mono',monospace;font-size:9px;letter-spacing:0;padding:2px 0 0 2px;overflow:hidden">0</div>
<div class="a" style="left:170px;top:93px;color:#dcdcdc;font-family:'Liberation Mono',monospace;font-size:10px;font-weight:bold">%</div>

  <svg class="a" style="left:6px;top:113px" width="32" height="11" viewBox="0 0 32 11"><rect width="10.500" height="11" fill="#fff"/><path d="M.5 10.500 L10 .5" stroke="#c8232a" stroke-width="1.300"/><rect x="10.500" width="10.500" height="11" fill="#000"/><rect x="21" width="11" height="11" fill="#fff"/></svg>
  <svg class="a" style="left:7px;top:132px" width="169" height="57" viewBox="0 0 170 58" preserveAspectRatio="none">
    <defs>
      <linearGradient id="hue" x1="0" x2="1" y1="0" y2="0">
        <stop offset="0" stop-color="#ff0000"/><stop offset=".07" stop-color="#ff5a00"/><stop offset=".17" stop-color="#fff200"/><stop offset=".28" stop-color="#32b41e"/><stop offset=".38" stop-color="#0a9a32"/><stop offset=".5" stop-color="#14a4d4"/><stop offset=".6" stop-color="#1a2a9c"/><stop offset=".68" stop-color="#2a1490"/><stop offset=".82" stop-color="#e6128c"/><stop offset=".92" stop-color="#ff0a50"/><stop offset="1" stop-color="#ff0000"/>
      </linearGradient>
      <linearGradient id="wb" x1="0" x2="0" y1="0" y2="1">
        <stop offset="0" stop-color="#fff" stop-opacity="1"/><stop offset=".04" stop-color="#fff" stop-opacity=".95"/><stop offset=".2" stop-color="#fff" stop-opacity=".6"/><stop offset=".35" stop-color="#fff" stop-opacity=".2"/><stop offset=".5" stop-color="#fff" stop-opacity="0"/><stop offset=".55" stop-color="#000" stop-opacity="0"/><stop offset=".72" stop-color="#000" stop-opacity=".35"/><stop offset=".88" stop-color="#000" stop-opacity=".8"/><stop offset="1" stop-color="#000" stop-opacity="1"/>
      </linearGradient>
    </defs>
    <rect width="170" height="58" fill="url(#hue)"/><rect width="170" height="58" fill="url(#wb)"/>
  </svg>
  <!-- layers panel -->
  <div class="a" style="left:2px;top:193px;width:187px;height:3px;background:#333"></div>
  <div class="a" style="left:2px;top:196px;width:187px;height:15px;background:#393939"></div>
  <div class="a" style="left:61px;top:196px;width:31px;height:16px;background:#4a4a4a"></div>
  <div class="a" style="left:7px;top:199.500px;color:#a4a4a4">色板</div>
  <div class="a" style="left:31px;top:196px;width:1px;height:15px;background:#303030"></div>
  <div class="a" style="left:37px;top:199.500px;color:#a4a4a4">画笔</div>
  <div class="a" style="left:66px;top:199.500px;color:#f0f0f0;font-weight:bold">图层</div>
  <div class="a" style="left:97px;top:199.500px;color:#a4a4a4">路径查找器</div>
    <svg class="a" style="left:176px;top:200px" width="11" height="7" viewBox="0 0 11 7"><path d="M0 1 h3.500 l-1.750 2.500z" fill="#ddd"/><path d="M5 1 h6 M5 3.500 h6 M5 6 h6" stroke="#c8c8c8" stroke-width="1.200"/></svg>

<div class="a" style="left:5px;top:215px;width:170px;height:140px;background:#575757;overflow:hidden">
<div class="a" style="left:17px;top:0;width:1px;height:140px;background:#424242"></div>
<div class="a" style="left:34px;top:0;width:4px;height:140px;background:#5b7fd8"></div>
<div class="a" style="left:142px;top:0;width:1px;height:140px;background:#424242"></div>
<div class="a" style="left:72px;top:1px;width:12px;height:1px;background:#ddd"></div>
<div class="a" style="left:0;top:2.5px;width:170px;height:1px;background:#3c3c3c"></div>
<div class="a" style="left:0;top:19.1px;width:170px;height:1px;background:#3c3c3c"></div>
<div class="a" style="left:0;top:35.6px;width:170px;height:1px;background:#3c3c3c"></div>
<div class="a" style="left:0;top:52.1px;width:170px;height:1px;background:#3c3c3c"></div>
<div class="a" style="left:0;top:68.7px;width:170px;height:1px;background:#3c3c3c"></div>
<div class="a" style="left:0;top:85.2px;width:170px;height:1px;background:#3c3c3c"></div>
<div class="a" style="left:0;top:101.8px;width:170px;height:1px;background:#3c3c3c"></div>
<div class="a" style="left:0;top:118.4px;width:170px;height:1px;background:#3c3c3c"></div>
<div class="a" style="left:0;top:134.9px;width:170px;height:1px;background:#3c3c3c"></div>
<svg class="a" style="left:3px;top:7.1px" width="12" height="8" viewBox="0 0 12 8"><path d="M.5 4 Q6 -2.500 11.500 4 Q6 9.500 .5 4z" fill="#e6e6e6" stroke="#3a3a3a" stroke-width=".8"/><circle cx="6" cy="3.800" r="2.300" fill="#3a3a3a"/><circle cx="5.300" cy="3" r=".8" fill="#ddd"/></svg>
<svg class="a" style="left:146px;top:6.6px" width="9" height="9" viewBox="0 0 9 9"><circle cx="4.500" cy="4.500" r="3.600" fill="#3a3a3a" stroke="#c4c4c4" stroke-width="1"/><circle cx="4.500" cy="4.500" r="1.500" fill="#8a8a8a"/></svg>
<div class="a" style="left:159px;top:8.6px;width:5px;height:5px;background:#5b86ea;border:1px solid #1c2c5c"></div>
<div class="a tri-d" style="left:57.5px;top:9.1px;border-left-width:3.500px;border-right-width:3.500px;border-top-width:5px"></div>
<svg class="a" style="left:71.0px;top:4.0px" width="14" height="15" viewBox="0 0 14 15"><rect x=".5" y=".5" width="13" height="14" fill="#f4f4f4" stroke="#1e1e1e"/><circle cx="7" cy="7.500" r="5.600" fill="#6fae2c"/><circle cx="5.500" cy="6" r="3" fill="#9acb4a"/><path d="M7 2 q3 4 0 11" stroke="#4a8a22" stroke-width="1" fill="none"/></svg>
<div class="a" style="left:88px;top:6.1px;color:#bdbdbd;font-size:10px;letter-spacing:1px">&lt;...</div>
<svg class="a" style="left:3px;top:23.7px" width="12" height="8" viewBox="0 0 12 8"><path d="M.5 4 Q6 -2.500 11.500 4 Q6 9.500 .5 4z" fill="#e6e6e6" stroke="#3a3a3a" stroke-width=".8"/><circle cx="6" cy="3.800" r="2.300" fill="#3a3a3a"/><circle cx="5.300" cy="3" r=".8" fill="#ddd"/></svg>
<svg class="a" style="left:146px;top:23.2px" width="9" height="9" viewBox="0 0 9 9"><circle cx="4.500" cy="4.500" r="3.600" fill="#3a3a3a" stroke="#c4c4c4" stroke-width="1"/><circle cx="4.500" cy="4.500" r="1.500" fill="#8a8a8a"/></svg>
<div class="a" style="left:159px;top:25.2px;width:5px;height:5px;background:#5b86ea;border:1px solid #1c2c5c"></div>
<div class="a tri-d" style="left:73px;top:25.7px;border-left-width:3.500px;border-right-width:3.500px;border-top-width:5px"></div>
<svg class="a" style="left:86.5px;top:20.6px" width="14" height="15" viewBox="0 0 14 15"><rect x=".5" y=".5" width="13" height="14" fill="#f4f4f4" stroke="#1e1e1e"/><circle cx="7" cy="7.500" r="5.600" fill="#6fae2c"/><circle cx="5.500" cy="6" r="3" fill="#9acb4a"/><path d="M7 2 q3 4 0 11" stroke="#4a8a22" stroke-width="1" fill="none"/></svg>
<svg class="a" style="left:3px;top:40.2px" width="12" height="8" viewBox="0 0 12 8"><path d="M.5 4 Q6 -2.500 11.500 4 Q6 9.500 .5 4z" fill="#e6e6e6" stroke="#3a3a3a" stroke-width=".8"/><circle cx="6" cy="3.800" r="2.300" fill="#3a3a3a"/><circle cx="5.300" cy="3" r=".8" fill="#ddd"/></svg>
<svg class="a" style="left:144px;top:37.7px" width="13" height="13" viewBox="0 0 13 13"><circle cx="6.500" cy="6.500" r="5.500" fill="#8a8a8a" stroke="#c8c8c8" stroke-width="1"/><circle cx="6.500" cy="6.500" r="3" fill="#9c9c9c" stroke="#d4d4d4" stroke-width="1"/></svg>
<div class="a" style="left:158px;top:40.7px;width:7px;height:7px;background:#5b86ea;border:1px solid #1c2c5c"></div>
<svg class="a" style="left:102.5px;top:37.1px" width="14" height="15" viewBox="0 0 14 15"><rect x=".5" y=".5" width="13" height="14" fill="#e4efd0" stroke="#1e1e1e"/><rect x="2.500" y="2.500" width="9" height="10" rx="3" fill="#d3e6b0"/></svg>
<svg class="a" style="left:3px;top:56.8px" width="12" height="8" viewBox="0 0 12 8"><path d="M.5 4 Q6 -2.500 11.500 4 Q6 9.500 .5 4z" fill="#e6e6e6" stroke="#3a3a3a" stroke-width=".8"/><circle cx="6" cy="3.800" r="2.300" fill="#3a3a3a"/><circle cx="5.300" cy="3" r=".8" fill="#ddd"/></svg>
<svg class="a" style="left:146px;top:56.2px" width="9" height="9" viewBox="0 0 9 9"><circle cx="4.500" cy="4.500" r="3.700" fill="#a2a2a2" stroke="#3a3a3a" stroke-width="1"/></svg>
<svg class="a" style="left:102.5px;top:53.6px" width="14" height="15" viewBox="0 0 14 15"><rect x=".5" y=".5" width="13" height="14" fill="#fbfbfb" stroke="#1e1e1e"/><path d="M3 12 q8 1 8.500 -8" stroke="#d6dccb" stroke-width="1.600" fill="none"/></svg>
<div class="a" style="left:89.5px;top:57.2px;width:0;height:0;border-top:3.500px solid transparent;border-bottom:3.500px solid transparent;border-left:5px solid #e6e6e6"></div>
<svg class="a" style="left:3px;top:73.3px" width="12" height="8" viewBox="0 0 12 8"><path d="M.5 4 Q6 -2.500 11.500 4 Q6 9.500 .5 4z" fill="#e6e6e6" stroke="#3a3a3a" stroke-width=".8"/><circle cx="6" cy="3.800" r="2.300" fill="#3a3a3a"/><circle cx="5.300" cy="3" r=".8" fill="#ddd"/></svg>
<svg class="a" style="left:146px;top:72.8px" width="9" height="9" viewBox="0 0 9 9"><circle cx="4.500" cy="4.500" r="3.700" fill="#a2a2a2" stroke="#3a3a3a" stroke-width="1"/></svg>
<svg class="a" style="left:102.5px;top:70.2px" width="14" height="15" viewBox="0 0 14 15"><rect x=".5" y=".5" width="13" height="14" fill="#fbfbfb" stroke="#1e1e1e"/><path d="M4 11 q5 0 6 -5" stroke="#eef0ea" stroke-width="1.200" fill="none"/></svg>
<svg class="a" style="left:3px;top:89.9px" width="12" height="8" viewBox="0 0 12 8"><path d="M.5 4 Q6 -2.500 11.500 4 Q6 9.500 .5 4z" fill="#e6e6e6" stroke="#3a3a3a" stroke-width=".8"/><circle cx="6" cy="3.800" r="2.300" fill="#3a3a3a"/><circle cx="5.300" cy="3" r=".8" fill="#ddd"/></svg>
<svg class="a" style="left:146px;top:89.4px" width="9" height="9" viewBox="0 0 9 9"><circle cx="4.500" cy="4.500" r="3.600" fill="#3a3a3a" stroke="#c4c4c4" stroke-width="1"/><circle cx="4.500" cy="4.500" r="1.500" fill="#8a8a8a"/></svg>
<svg class="a" style="left:102.5px;top:86.8px" width="14" height="15" viewBox="0 0 14 15"><rect x=".5" y=".5" width="13" height="14" fill="#fbfbfb" stroke="#1e1e1e"/><path d="M3 12 q8 1 8.500 -8" stroke="#d6dccb" stroke-width="1.600" fill="none"/></svg>
<div class="a" style="left:89.5px;top:90.4px;width:0;height:0;border-top:3.500px solid transparent;border-bottom:3.500px solid transparent;border-left:5px solid #e6e6e6"></div>
<svg class="a" style="left:3px;top:106.4px" width="12" height="8" viewBox="0 0 12 8"><path d="M.5 4 Q6 -2.500 11.500 4 Q6 9.500 .5 4z" fill="#e6e6e6" stroke="#3a3a3a" stroke-width=".8"/><circle cx="6" cy="3.800" r="2.300" fill="#3a3a3a"/><circle cx="5.300" cy="3" r=".8" fill="#ddd"/></svg>
<svg class="a" style="left:146px;top:105.9px" width="9" height="9" viewBox="0 0 9 9"><circle cx="4.500" cy="4.500" r="3.700" fill="#a2a2a2" stroke="#3a3a3a" stroke-width="1"/></svg>
<svg class="a" style="left:102.5px;top:103.3px" width="14" height="15" viewBox="0 0 14 15"><rect x=".5" y=".5" width="13" height="14" fill="#fbfbfb" stroke="#1e1e1e"/><path d="M4 11 q5 0 6 -5" stroke="#eef0ea" stroke-width="1.200" fill="none"/></svg>
<svg class="a" style="left:3px;top:123.0px" width="12" height="8" viewBox="0 0 12 8"><path d="M.5 4 Q6 -2.500 11.500 4 Q6 9.500 .5 4z" fill="#e6e6e6" stroke="#3a3a3a" stroke-width=".8"/><circle cx="6" cy="3.800" r="2.300" fill="#3a3a3a"/><circle cx="5.300" cy="3" r=".8" fill="#ddd"/></svg>
<svg class="a" style="left:146px;top:122.5px" width="9" height="9" viewBox="0 0 9 9"><circle cx="4.500" cy="4.500" r="3.700" fill="#a2a2a2" stroke="#3a3a3a" stroke-width="1"/></svg>
<svg class="a" style="left:102.5px;top:119.9px" width="14" height="15" viewBox="0 0 14 15"><rect x=".5" y=".5" width="13" height="14" fill="#fbfbfb" stroke="#1e1e1e"/><path d="M4 11 q5 0 6 -5" stroke="#eef0ea" stroke-width="1.200" fill="none"/></svg>
</div>
<div class="a" style="left:176px;top:215px;width:10px;height:140px;background:#3a3a3a"></div>
<div class="a" style="left:177px;top:218.5px;width:0;height:0;border-left:4px solid transparent;border-right:4px solid transparent;border-bottom:5px solid #eee"></div>
<div class="a" style="left:176px;top:245px;width:9px;height:20px;background:#a4a4a4"></div>
</div>


<div class="a" style="left:671px;top:488px;width:2px;height:6px;background:#fff"></div>
<div id="status" class="a" style="font-size:9px;color:#d6d6d6;white-space:nowrap">
  <div class="a" style="left:3px;top:2px;width:18px;height:8px;background:#525252;border-radius:2px"></div>
  <svg class="a" style="left:6px;top:3px" width="12" height="6" viewBox="0 0 12 6"><circle cx="3" cy="3" r="2" fill="none" stroke="#777" stroke-width="1"/><path d="M6 3 h5 M9 1.500 v3" stroke="#777" stroke-width="1"/></svg>
  <svg class="a" style="left:29px;top:1px" width="10" height="9" viewBox="0 0 10 9"><path d="M.5 2.500 v6 h7 v-3" fill="none" stroke="#ddd" stroke-width="1.200"/><path d="M3 6 q1 -3.500 4 -3.500 v-2 l3 3 -3 3 v-2 q-2 0 -4 1.500z" fill="#ddd"/></svg>
  <div class="a" style="left:48px;top:1px;width:32px;height:10px;background:#b0b0b0;color:#333;font-family:'Liberation Mono','Noto Sans CJK SC',monospace;font-size:9px;letter-spacing:-.5px;line-height:11px;padding:0 0 0 2px;overflow:hidden">156.82</div>
  <div class="a" style="left:81px;top:0;width:11px;height:11px;background:#5d5d5d;border:1px solid #3a3a3a"><div class="a tri-d" style="left:1px;top:4px"></div></div>
  <svg class="a" style="left:99px;top:3px" width="24" height="6" viewBox="0 0 24 6"><path d="M1 0 v6 M6 0 v6 l-4 -3z M19 0 v6 l-4 -3z" stroke="#646464" fill="#646464" stroke-width="1"/></svg>
  <div class="a" style="left:127px;top:1px;width:31px;height:10px;background:#b0b0b0;color:#333;font-family:'Liberation Mono',monospace;font-size:9px;line-height:11px;padding:0 0 0 2px;overflow:hidden">1</div>
  <div class="a" style="left:159px;top:0;width:11px;height:11px;background:#5d5d5d;border:1px solid #3a3a3a"><div class="a tri-d" style="left:1px;top:4px"></div></div>
  <svg class="a" style="left:177px;top:3px" width="24" height="6" viewBox="0 0 24 6"><path d="M3 0 v6 l4 -3z M16 0 v6 l4 -3z M22 0 v6" stroke="#646464" fill="#646464" stroke-width="1"/></svg>
  <div class="a" style="left:207px;top:0;width:1px;height:11px;background:#333"></div>
  <div class="a" style="left:273px;top:2px;font-size:9.500px;color:#e0e0e0">选择</div>
  <div class="a" style="left:366px;top:2px;width:0;height:0;border-top:3.500px solid transparent;border-bottom:3.500px solid transparent;border-left:5px solid #eee"></div>
  <div class="a" style="left:375px;top:0;width:241px;height:11px;background:#333"></div>
  <div class="a" style="left:379px;top:2px;width:0;height:0;border-top:3.500px solid transparent;border-bottom:3.500px solid transparent;border-right:5px solid #eee"></div>
  <div class="a" style="left:551px;top:0;width:12px;height:11px;background:#8c8c8c"></div>
  <div class="a" style="left:603px;top:10px;width:12px;height:1px;background:#fff"></div>
</div>

<div id="dark" class="a" style="left:791px;top:376px;width:209px;height:130px;background:#363636">
  <div class="a" style="left:0;top:0;width:33px;height:130px;background:#3c3c3c"></div>
  <div class="a" style="left:33px;top:0;width:33px;height:130px;background:#2a2a2a"></div>
  <div class="a" style="left:66px;top:0;width:33px;height:130px;background:#343434"></div>
</div>
</body>
</html>
